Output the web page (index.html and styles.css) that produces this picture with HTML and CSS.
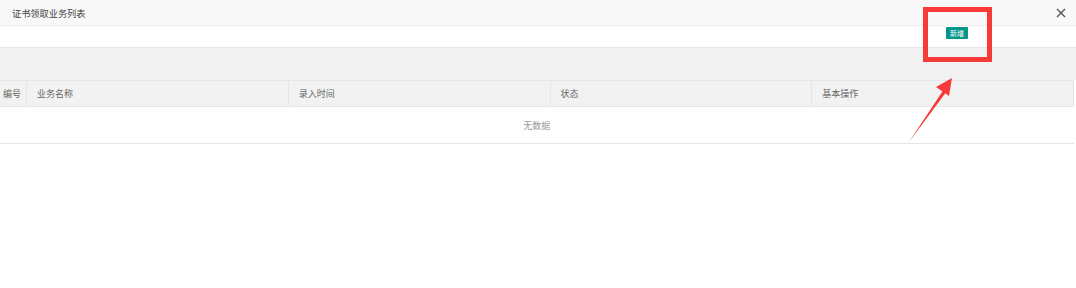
FILE: index.html
```html
<!DOCTYPE html>
<html lang="zh-CN">
<head>
  <meta charset="UTF-8">
  <title>证书领取业务列表</title>
  <link rel="stylesheet" href="styles.css">
</head>
<body>
  <div class="layer">
    <div class="layer-title">
      <span>证书领取业务列表</span>
      <svg class="close" width="10" height="10" viewBox="0 0 10 10">
        <path d="M1 1 L9 9 M9 1 L1 9" stroke="#555" stroke-width="1.4" />
      </svg>
    </div>

    <div class="layer-content">
      <div class="btn-bar">
        <span class="btn">新增</span>
      </div>
      <div class="table-tool"></div>
      <table class="data-table">
        <thead>
          <tr>
            <th class="col-id">编号</th>
            <th>业务名称</th>
            <th>录入时间</th>
            <th>状态</th>
            <th>基本操作</th>
          </tr>
        </thead>
        <tbody>
          <tr>
            <td class="empty" colspan="5">无数据</td>
          </tr>
        </tbody>
      </table>
    </div>
  </div>

  <!-- annotation: red box + arrow -->
  <div class="mark-box"></div>
  <svg class="mark-arrow" width="60" height="80" viewBox="0 0 60 80">
    <path d="M9 72 L44 19 L47 21 Z" fill="#f73b3b" />
    <path d="M52 8 L36 17 L49 26 Z" fill="#f73b3b" />
  </svg>
</body>
</html>
```

FILE: styles.css
```css
body {
  margin: 0;
  background-color: #fff;
  font-family: "Noto Sans CJK SC", "Noto Sans", sans-serif;
}

/* Layer title */
.layer-title {
  display: flex;
  justify-content: space-between;
  align-items: center;
  height: 25px;
  padding: 0 12px;
  background-color: #f8f8f8;
  border-bottom: 1px solid #eee;
  font-size: 9.2px;
  color: #444;
}

.close {
  display: block;
  margin-right: -2px;
}

/* Toolbar with the add button */
.btn-bar {
  display: flex;
  justify-content: flex-end;
  align-items: flex-start;
  height: 20px;
  padding: 1px 108px 0 0;
}

.btn {
  height: 12px;
  line-height: 12px;
  padding: 0 4px;
  border-radius: 1px;
  background-color: #009688;
  color: #fff;
  font-size: 7px;
}

.table-tool {
  height: 32px;
  border-top: 1px solid #e6e6e6;
  background-color: #f2f2f2;
}

/* Table */
.data-table {
  width: 1074px;
  border-collapse: collapse;
  table-layout: fixed;
  font-size: 9px;
  color: #666;
}

.data-table th {
  height: 25px;
  padding: 0 0 0 10px;
  text-align: left;
  font-weight: normal;
  background-color: #f2f2f2;
  border: 1px solid #e6e6e6;
  border-left: none;
}

.data-table th:last-child {
  border-right: 1px solid #e6e6e6;
}

.data-table th.col-id {
  width: 23px;
  padding-left: 3px;
}

.data-table td {
  height: 36px;
  padding: 0;
  border-bottom: 1px solid #e6e6e6;
}

.data-table td.empty {
  text-align: center;
  color: #999;
}

/* Annotation */
.mark-box {
  position: absolute;
  left: 923px;
  top: 7px;
  width: 59px;
  height: 45px;
  border: 5px solid #f73b3b;
}

.mark-arrow {
  position: absolute;
  left: 900px;
  top: 70px;
}
```
